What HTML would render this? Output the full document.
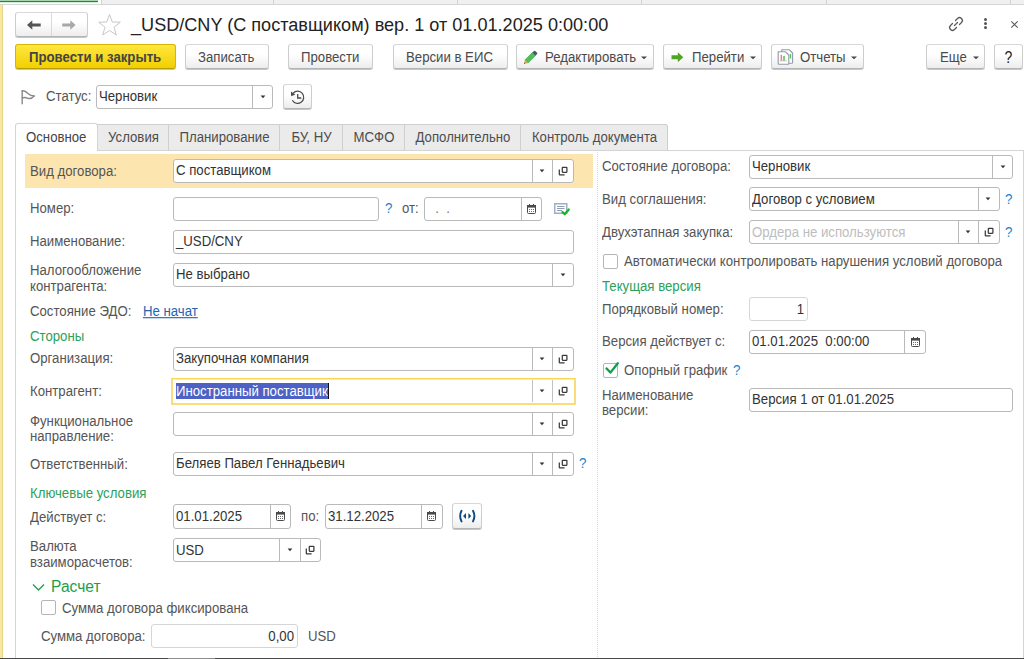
<!DOCTYPE html>
<html><head><meta charset="utf-8">
<style>
*{box-sizing:border-box}
html,body{margin:0;padding:0}
body{width:1024px;height:659px;overflow:hidden;position:relative;background:#fff;font-family:"Liberation Sans",sans-serif;font-size:13.2px;color:#4d4d4d}
.a{position:absolute}
.t{position:absolute;white-space:nowrap;line-height:16px;font-size:13.2px;color:#4d4d4d;transform:scaleY(1.12);transform-origin:0 12px}
.btn{position:absolute;border:1px solid #cdcdcd;border-top-color:#d8d8d8;border-bottom-color:#b4b4b4;border-radius:3px;background:linear-gradient(#fff 0%,#fff 40%,#ededed 100%);box-shadow:0 1px 0 #c6c6c6;color:#4a4a4a;font-size:13.2px;line-height:24px;white-space:nowrap}
.inp{position:absolute;border:1px solid #bababa;border-radius:3px;background:#fff}
.dv{position:absolute;top:0;bottom:0;width:1px;background:#bababa}
.tab{position:absolute;top:124px;height:26px;background:#ebebeb;border:1px solid #cfcfcf;border-right:none;border-bottom:none;color:#4d4d4d;line-height:25px;white-space:nowrap}
</style></head><body>

<div class="a" style="left:0;top:0;width:1024px;height:4px;background:#f0f0f0"></div>
<div class="a" style="left:0;top:0;width:101px;height:4px;background:#fff"></div>
<div class="a" style="left:0;top:0;width:98px;height:1px;background:#a6d6ae"></div>
<div class="a" style="left:0;top:1px;width:98px;height:1px;background:#0a9638"></div>
<div class="a" style="left:0;top:2px;width:98px;height:1px;background:#d5ecd9"></div>
<div class="a" style="left:101px;top:0;width:1px;height:4px;background:#d2d2d2"></div>
<div class="a" style="left:273px;top:0;width:1px;height:4px;background:#d2d2d2"></div>
<div class="a" style="left:457px;top:0;width:1px;height:4px;background:#d2d2d2"></div>
<div class="a" style="left:641px;top:0;width:1px;height:4px;background:#d2d2d2"></div>
<div class="a" style="left:826px;top:0;width:1px;height:4px;background:#d2d2d2"></div>
<div class="a" style="left:1010px;top:0;width:1px;height:4px;background:#d2d2d2"></div>
<div class="a" style="left:0;top:4px;width:1024px;height:1px;background:#d4d4d4"></div>
<div class="a" style="left:0;top:5px;width:2px;height:653px;background:#fbe99b"></div>
<div class="a" style="left:2px;top:5px;width:1px;height:653px;background:#e3d68f"></div>
<div class="a" style="left:0;top:658px;width:1024px;height:1px;background:#4a4a4a"></div>
<div class="a" style="left:168px;top:658px;width:47px;height:1px;background:#8c8c8c"></div>
<div class="btn" style="left:15px;top:12px;width:73px;height:25px;"></div>
<div class="a" style="left:51px;top:13px;width:1px;height:23px;background:#dadada"></div>
<svg class="a" style="left:26px;top:19px" width="16" height="12" viewBox="0 0 16 12"><path d="M1 6 L6.3 1.3 V4.5 H14.7 V7.5 H6.3 V10.7 Z" fill="#555"/></svg>
<svg class="a" style="left:62px;top:19px" width="16" height="12" viewBox="0 0 16 12"><path d="M13.6 6 L8.3 1.3 V4.5 H0.2 V7.5 H8.3 V10.7 Z" fill="#a8a8a8"/></svg>
<svg class="a" style="left:97px;top:13px" width="25" height="24" viewBox="0 0 25 24"><path d="M12.5 1.5 L15.3 9 L23.3 9.2 L17 14.2 L19.3 22 L12.5 17.5 L5.7 22 L8 14.2 L1.7 9.2 L9.7 9 Z" fill="none" stroke="#c4c8cc" stroke-width="1"/></svg>
<div class="t" style="left:131px;top:14px;color:#222;font-size:18.1px;line-height:22px;transform:scaleY(1.03);transform-origin:0 17px">_USD/CNY (С поставщиком) вер. 1 от 01.01.2025 0:00:00</div>
<svg class="a" style="left:947px;top:15px" width="18" height="18" viewBox="0 0 18 18"><g fill="none" stroke="#5c5c5c" stroke-width="1.3" stroke-linecap="round"><path d="M7.5 10.5 L10.5 7.5"/><path d="M8.5 5.5 L10.5 3.5 A2.8 2.8 0 0 1 14.5 7.5 L12.5 9.5"/><path d="M9.5 12.5 L7.5 14.5 A2.8 2.8 0 0 1 3.5 10.5 L5.5 8.5"/></g></svg>
<div class="a" style="left:984px;top:18px;width:3px;height:3px;border-radius:50%;background:#555"></div>
<div class="a" style="left:984px;top:22px;width:3px;height:3px;border-radius:50%;background:#555"></div>
<div class="a" style="left:984px;top:26px;width:3px;height:3px;border-radius:50%;background:#555"></div>
<svg class="a" style="left:1010px;top:20px" width="9" height="9" viewBox="0 0 9 9"><path d="M1.3 1.3 L7.7 7.7 M7.7 1.3 L1.3 7.7" stroke="#555" stroke-width="1.05"/></svg>
<div class="btn" style="left:15px;top:44px;width:161px;height:25px;background:linear-gradient(#ffe640,#f2d000);border-color:#d6b600;border-bottom-color:#b89c00"></div>
<div class="t" style="left:29px;top:50px;color:#4a4a4a;font-weight:bold;color:#444">Провести и закрыть</div>
<div class="btn" style="left:185px;top:44px;width:84px;height:25px;"></div>
<div class="t" style="left:198px;top:50px;color:#4a4a4a;">Записать</div>
<div class="btn" style="left:288px;top:44px;width:85px;height:25px;"></div>
<div class="t" style="left:301px;top:50px;color:#4a4a4a;">Провести</div>
<div class="btn" style="left:393px;top:44px;width:115px;height:25px;"></div>
<div class="t" style="left:406px;top:50px;color:#4a4a4a;">Версии в ЕИС</div>
<div class="btn" style="left:516px;top:44px;width:138px;height:25px;"></div>
<div class="t" style="left:545px;top:50px;color:#4a4a4a;">Редактировать</div>
<div class="btn" style="left:663px;top:44px;width:99px;height:25px;"></div>
<div class="t" style="left:692px;top:50px;color:#4a4a4a;">Перейти</div>
<div class="btn" style="left:771px;top:44px;width:93px;height:25px;"></div>
<div class="t" style="left:800px;top:50px;color:#4a4a4a;">Отчеты</div>
<div class="btn" style="left:926px;top:44px;width:59px;height:25px;"></div>
<div class="t" style="left:940px;top:50px;color:#4a4a4a;">Еще</div>
<div class="btn" style="left:994px;top:44px;width:29px;height:25px;"></div>
<div class="t" style="left:994px;top:50px;color:#4a4a4a;width:29px;text-align:center;color:#222;font-size:14px">?</div>
<svg class="a" style="left:641px;top:56px" width="6" height="4" viewBox="0 0 6 4"><path d="M0 0.5 H6 L3 3.3 Z" fill="#444"/></svg>
<svg class="a" style="left:750px;top:56px" width="6" height="4" viewBox="0 0 6 4"><path d="M0 0.5 H6 L3 3.3 Z" fill="#444"/></svg>
<svg class="a" style="left:851px;top:56px" width="6" height="4" viewBox="0 0 6 4"><path d="M0 0.5 H6 L3 3.3 Z" fill="#444"/></svg>
<svg class="a" style="left:973px;top:56px" width="6" height="4" viewBox="0 0 6 4"><path d="M0 0.5 H6 L3 3.3 Z" fill="#444"/></svg>
<svg class="a" style="left:523px;top:50px" width="15" height="15" viewBox="0 0 15 15"><path d="M9.3 2.6 L12.4 5.7 L5 13.1 L1.9 10 Z" fill="#4fbf5a" stroke="#3da548" stroke-width="0.6"/><path d="M9.3 2.6 L11 0.9 Q11.6 0.4 12.2 0.9 L14.1 2.8 Q14.6 3.4 14.1 4 L12.4 5.7 Z" fill="#4a5566"/><path d="M1.9 10 L5 13.1 L1 14 Z" fill="#d8a850"/><path d="M1.3 12.6 L2.4 13.7 L1 14 Z" fill="#555"/></svg>
<svg class="a" style="left:671px;top:52px" width="13" height="11" viewBox="0 0 13 11"><path d="M0.5 3.2 H6.8 V0.3 L12.3 5.3 L6.8 10.3 V7.3 H0.5 Z" fill="#4ea720"/></svg>
<svg class="a" style="left:777px;top:49px" width="17" height="17" viewBox="0 0 17 17"><path d="M4.8 0.8 H12.3 L15.6 4.1 V13.6 Q15.6 14.3 14.9 14.3 H5.5 Q4.8 14.3 4.8 13.6 Z" fill="#fff" stroke="#8e9caa" stroke-width="1.1"/><path d="M1.2 2.8 H8.6 L11.8 6 V14.6 Q11.8 15.3 11.1 15.3 H1.9 Q1.2 15.3 1.2 14.6 Z" fill="#fff" stroke="#8e9caa" stroke-width="1.1"/><rect x="3.6" y="5.8" width="1.5" height="6" fill="#ff7a6a"/><rect x="6.2" y="7" width="1.6" height="4.8" fill="#5cc35c"/><rect x="12.8" y="5" width="1.3" height="4.5" fill="#5cc35c"/><path d="M2.6 11.9 H10" stroke="#aaa" stroke-width="0.6"/></svg>
<svg class="a" style="left:16px;top:86px" width="24" height="22" viewBox="0 0 24 22"><g fill="none" stroke="#8a8a8a" stroke-width="1.4" stroke-linecap="round"><path d="M6.2 4.7 V17.7"/><path d="M6.2 4.9 C8.5 4.3 10 5.5 12 7.5 C14 9.5 15.5 10 18.2 10"/><path d="M6.2 12 C8 11.3 10 11.5 12 12.3 C14 13 16 12.5 18.2 10"/></g></svg>
<div class="t" style="left:46px;top:89px;color:#555;font-size:13.2px;line-height:16px;">Статус:</div>
<div class="inp" style="left:96px;top:85px;width:177px;height:24px;border-color:#bababa">
<div class="dv" style="left:155px"></div>
</div>
<svg class="a" style="left:260px;top:95px" width="6" height="4" viewBox="0 0 6 4"><path d="M0.6 0.6 H5.4 L3 3.3 Z" fill="#333"/></svg>
<div class="t" style="left:99px;top:89px;color:#333">Черновик</div>
<div class="btn" style="left:283px;top:84px;width:29px;height:25px;"></div>
<svg class="a" style="left:289px;top:89px" width="17" height="17" viewBox="0 0 17 17"><path d="M3.3 11.3 A6.1 6.1 0 1 0 4.3 4" fill="none" stroke="#4a4a4a" stroke-width="1.25"/><path d="M1.9 2.4 L2.2 7.2 L6.4 5.5 Z" fill="#4a4a4a"/><path d="M8.7 4.9 V9 H12.3" fill="none" stroke="#4a4a4a" stroke-width="1.3"/></svg>
<div class="a" style="left:15px;top:150px;width:1009px;height:508px;border-left:1px solid #d4d4d4;border-top:1px solid #d4d4d4;border-right:1px solid #d4d4d4"></div>
<div class="tab" style="left:97px;width:72px"></div>
<div class="t" style="left:98px;width:71px;text-align:center;top:130px">Условия</div>
<div class="tab" style="left:168px;width:112px"></div>
<div class="t" style="left:169px;width:111px;text-align:center;top:130px">Планирование</div>
<div class="tab" style="left:279px;width:64px"></div>
<div class="t" style="left:280px;width:63px;text-align:center;top:130px">БУ, НУ</div>
<div class="tab" style="left:342px;width:63px"></div>
<div class="t" style="left:343px;width:62px;text-align:center;top:130px">МСФО</div>
<div class="tab" style="left:404px;width:117px"></div>
<div class="t" style="left:405px;width:116px;text-align:center;top:130px">Дополнительно</div>
<div class="tab" style="left:520px;width:148px;border-right:1px solid #cfcfcf;border-top-right-radius:3px"></div>
<div class="t" style="left:521px;width:147px;text-align:center;top:130px">Контроль документа</div>
<div class="a" style="left:15px;top:123px;width:83px;height:28px;background:#fff;border:1px solid #d4d4d4;border-bottom:none;border-top-left-radius:3px;border-top-right-radius:3px"></div>
<div class="t" style="left:26px;top:130px;color:#444;font-size:13.2px;line-height:16px;">Основное</div>
<div class="a" style="left:25px;top:154px;width:568px;height:34px;background:#fde5b0"></div>
<div class="a" style="left:597px;top:152px;width:1px;height:505px;border-left:1px dotted #d8d8d8"></div>
<div class="t" style="left:30px;top:164px;color:#555;font-size:13.2px;line-height:16px;">Вид договора:</div>
<div class="inp" style="left:173px;top:159px;width:401px;height:24px;border-color:#bababa">
<div class="dv" style="left:358px"></div>
<div class="dv" style="left:378px"></div>
</div>
<svg class="a" style="left:539px;top:169px" width="6" height="4" viewBox="0 0 6 4"><path d="M0.6 0.6 H5.4 L3 3.3 Z" fill="#333"/></svg>
<svg class="a" style="left:558px;top:166px" width="11" height="11" viewBox="0 0 11 11"><rect x="4.3" y="1.3" width="4.6" height="5" rx="0.5" fill="none" stroke="#3a3a3a" stroke-width="1.25"/><path d="M1.3 3.6 V8.2 Q1.3 8.8 1.9 8.8 H6.6" fill="none" stroke="#3a3a3a" stroke-width="1.25"/></svg>
<div class="t" style="left:176px;top:163px;color:#333">С поставщиком</div>
<div class="t" style="left:30px;top:201px;color:#555;font-size:13.2px;line-height:16px;">Номер:</div>
<div class="inp" style="left:173px;top:197px;width:206px;height:24px;border-color:#bababa">
</div>
<div class="t" style="left:385px;top:201px;color:#2384d2;font-size:13.4px">?</div>
<div class="t" style="left:402px;top:201px;color:#555;font-size:13.2px;line-height:16px;">от:</div>
<div class="inp" style="left:424px;top:197px;width:118px;height:24px;border-color:#bababa">
<div class="dv" style="left:96px"></div>
</div>
<svg class="a" style="left:526px;top:203px" width="11" height="12" viewBox="0 0 11 12"><rect x="1.5" y="2.5" width="8" height="8" rx="1" fill="#fff" stroke="#4a4a4a" stroke-width="1"/><rect x="1" y="2" width="9" height="2.6" fill="#4a4a4a"/><rect x="3" y="1" width="1" height="2" fill="#4a4a4a"/><rect x="7" y="1" width="1" height="2" fill="#4a4a4a"/><g fill="#6a6a6a"><rect x="3" y="6" width="1" height="1"/><rect x="5" y="6" width="1" height="1"/><rect x="7" y="6" width="1" height="1"/><rect x="3" y="8" width="1" height="1"/><rect x="5" y="8" width="1" height="1"/><rect x="7" y="8" width="1" height="1"/></g></svg>
<div class="t" style="left:428px;top:201px;color:#777">&nbsp; .&nbsp; .</div>
<svg class="a" style="left:554px;top:203px" width="16" height="13" viewBox="0 0 16 13"><rect x="0.75" y="0.75" width="12" height="9.5" fill="#fff" stroke="#9fb0c4" stroke-width="1.5"/><path d="M3 3.5 H10.5 M3 5.5 H10.5 M3 7.5 H8" stroke="#8fa0b4" stroke-width="1"/><path d="M8.5 9 L10.7 11.3 L14.8 6.5" fill="none" stroke="#18b52b" stroke-width="2.2" stroke-linecap="round" stroke-linejoin="round"/></svg>
<div class="t" style="left:30px;top:234px;color:#555;font-size:13.2px;line-height:16px;">Наименование:</div>
<div class="inp" style="left:173px;top:230px;width:401px;height:24px;border-color:#bababa">
</div>
<div class="t" style="left:176px;top:234px;color:#333">_USD/CNY</div>
<div class="t" style="left:30px;top:263px;color:#555;font-size:13.2px;line-height:16px;">Налогообложение</div>
<div class="t" style="left:30px;top:279px;color:#555;font-size:13.2px;line-height:16px;">контрагента:</div>
<div class="inp" style="left:173px;top:263px;width:401px;height:24px;border-color:#bababa">
<div class="dv" style="left:378px"></div>
</div>
<svg class="a" style="left:560px;top:273px" width="6" height="4" viewBox="0 0 6 4"><path d="M0.6 0.6 H5.4 L3 3.3 Z" fill="#333"/></svg>
<div class="t" style="left:176px;top:267px;color:#333">Не выбрано</div>
<div class="t" style="left:30px;top:304px;color:#555;font-size:13.2px;line-height:16px;">Состояние ЭДО:</div>
<div class="t" style="left:143px;top:304px;color:#2166b5;font-size:13.2px;line-height:16px;text-decoration:underline">Не начат</div>
<div class="t" style="left:30px;top:329px;color:#2ba15a;font-size:13.2px;line-height:16px;">Стороны</div>
<div class="t" style="left:30px;top:351px;color:#555;font-size:13.2px;line-height:16px;">Организация:</div>
<div class="inp" style="left:173px;top:347px;width:401px;height:24px;border-color:#bababa">
<div class="dv" style="left:358px"></div>
<div class="dv" style="left:378px"></div>
</div>
<svg class="a" style="left:539px;top:357px" width="6" height="4" viewBox="0 0 6 4"><path d="M0.6 0.6 H5.4 L3 3.3 Z" fill="#333"/></svg>
<svg class="a" style="left:558px;top:354px" width="11" height="11" viewBox="0 0 11 11"><rect x="4.3" y="1.3" width="4.6" height="5" rx="0.5" fill="none" stroke="#3a3a3a" stroke-width="1.25"/><path d="M1.3 3.6 V8.2 Q1.3 8.8 1.9 8.8 H6.6" fill="none" stroke="#3a3a3a" stroke-width="1.25"/></svg>
<div class="t" style="left:176px;top:351px;color:#333">Закупочная компания</div>
<div class="t" style="left:30px;top:384px;color:#555;font-size:13.2px;line-height:16px;">Контрагент:</div>
<div class="a" style="left:171px;top:378px;width:405px;height:27px;border:2px solid #fbdc7c;border-top:1px solid #fbd657;box-shadow:inset 0 1px 0 #fdebb0;border-radius:1px;background:#fff"></div>
<div class="a" style="left:532px;top:380px;width:1px;height:22px;background:#c2c2c2"></div>
<div class="a" style="left:552px;top:380px;width:1px;height:22px;background:#c2c2c2"></div>
<svg class="a" style="left:539px;top:389px" width="6" height="4" viewBox="0 0 6 4"><path d="M0.6 0.6 H5.4 L3 3.3 Z" fill="#333"/></svg>
<svg class="a" style="left:558px;top:386px" width="11" height="11" viewBox="0 0 11 11"><rect x="4.3" y="1.3" width="4.6" height="5" rx="0.5" fill="none" stroke="#3a3a3a" stroke-width="1.25"/><path d="M1.3 3.6 V8.2 Q1.3 8.8 1.9 8.8 H6.6" fill="none" stroke="#3a3a3a" stroke-width="1.25"/></svg>
<div class="a" style="left:176px;top:383px;width:153px;height:16px;background:#4d62c4"></div>
<div class="t" style="left:176px;top:384px;color:#fff;font-size:13.2px;line-height:16px;">Иностранный поставщик</div>
<div class="a" style="left:328px;top:383px;width:1px;height:16px;background:#111"></div>
<div class="t" style="left:30px;top:414px;color:#555;font-size:13.2px;line-height:16px;">Функциональное</div>
<div class="t" style="left:30px;top:429px;color:#555;font-size:13.2px;line-height:16px;">направление:</div>
<div class="inp" style="left:173px;top:412px;width:401px;height:24px;border-color:#bababa">
<div class="dv" style="left:358px"></div>
<div class="dv" style="left:378px"></div>
</div>
<svg class="a" style="left:539px;top:422px" width="6" height="4" viewBox="0 0 6 4"><path d="M0.6 0.6 H5.4 L3 3.3 Z" fill="#333"/></svg>
<svg class="a" style="left:558px;top:419px" width="11" height="11" viewBox="0 0 11 11"><rect x="4.3" y="1.3" width="4.6" height="5" rx="0.5" fill="none" stroke="#3a3a3a" stroke-width="1.25"/><path d="M1.3 3.6 V8.2 Q1.3 8.8 1.9 8.8 H6.6" fill="none" stroke="#3a3a3a" stroke-width="1.25"/></svg>
<div class="t" style="left:30px;top:457px;color:#555;font-size:13.2px;line-height:16px;">Ответственный:</div>
<div class="inp" style="left:173px;top:452px;width:401px;height:24px;border-color:#bababa">
<div class="dv" style="left:358px"></div>
<div class="dv" style="left:378px"></div>
</div>
<svg class="a" style="left:539px;top:462px" width="6" height="4" viewBox="0 0 6 4"><path d="M0.6 0.6 H5.4 L3 3.3 Z" fill="#333"/></svg>
<svg class="a" style="left:558px;top:459px" width="11" height="11" viewBox="0 0 11 11"><rect x="4.3" y="1.3" width="4.6" height="5" rx="0.5" fill="none" stroke="#3a3a3a" stroke-width="1.25"/><path d="M1.3 3.6 V8.2 Q1.3 8.8 1.9 8.8 H6.6" fill="none" stroke="#3a3a3a" stroke-width="1.25"/></svg>
<div class="t" style="left:176px;top:456px;color:#333">Беляев Павел Геннадьевич</div>
<div class="t" style="left:579px;top:456px;color:#2384d2;font-size:13.4px">?</div>
<div class="t" style="left:30px;top:486px;color:#2ba15a;font-size:13.2px;line-height:16px;">Ключевые условия</div>
<div class="t" style="left:30px;top:510px;color:#555;font-size:13.2px;line-height:16px;">Действует с:</div>
<div class="inp" style="left:173px;top:504px;width:118px;height:25px;border-color:#bababa">
<div class="dv" style="left:96px"></div>
</div>
<svg class="a" style="left:275px;top:510px" width="11" height="12" viewBox="0 0 11 12"><rect x="1.5" y="2.5" width="8" height="8" rx="1" fill="#fff" stroke="#4a4a4a" stroke-width="1"/><rect x="1" y="2" width="9" height="2.6" fill="#4a4a4a"/><rect x="3" y="1" width="1" height="2" fill="#4a4a4a"/><rect x="7" y="1" width="1" height="2" fill="#4a4a4a"/><g fill="#6a6a6a"><rect x="3" y="6" width="1" height="1"/><rect x="5" y="6" width="1" height="1"/><rect x="7" y="6" width="1" height="1"/><rect x="3" y="8" width="1" height="1"/><rect x="5" y="8" width="1" height="1"/><rect x="7" y="8" width="1" height="1"/></g></svg>
<div class="t" style="left:176px;top:509px;color:#333">01.01.2025</div>
<div class="t" style="left:301px;top:509px;color:#555;font-size:13.2px;line-height:16px;">по:</div>
<div class="inp" style="left:325px;top:504px;width:118px;height:25px;border-color:#bababa">
<div class="dv" style="left:95px"></div>
</div>
<svg class="a" style="left:426px;top:510px" width="11" height="12" viewBox="0 0 11 12"><rect x="1.5" y="2.5" width="8" height="8" rx="1" fill="#fff" stroke="#4a4a4a" stroke-width="1"/><rect x="1" y="2" width="9" height="2.6" fill="#4a4a4a"/><rect x="3" y="1" width="1" height="2" fill="#4a4a4a"/><rect x="7" y="1" width="1" height="2" fill="#4a4a4a"/><g fill="#6a6a6a"><rect x="3" y="6" width="1" height="1"/><rect x="5" y="6" width="1" height="1"/><rect x="7" y="6" width="1" height="1"/><rect x="3" y="8" width="1" height="1"/><rect x="5" y="8" width="1" height="1"/><rect x="7" y="8" width="1" height="1"/></g></svg>
<div class="t" style="left:328px;top:509px;color:#333">31.12.2025</div>
<div class="btn" style="left:452px;top:503px;width:30px;height:26px;"></div>
<svg class="a" style="left:458px;top:509px" width="19" height="14" viewBox="0 0 19 14"><g fill="none" stroke="#0e4a80" stroke-width="1.9" stroke-linecap="round"><path d="M3.5 1.8 Q0.8 7 3.5 12.4"/><path d="M15 1.8 Q17.8 7 15 12.4"/></g><path d="M5 7 L8 4 V10 Z M13.2 7 L10.4 4 V10 Z" fill="#0e4a80"/></svg>
<div class="t" style="left:30px;top:539px;color:#555;font-size:13.2px;line-height:16px;">Валюта</div>
<div class="t" style="left:30px;top:555px;color:#555;font-size:13.2px;line-height:16px;">взаиморасчетов:</div>
<div class="inp" style="left:173px;top:538px;width:148px;height:24px;border-color:#bababa">
<div class="dv" style="left:105px"></div>
<div class="dv" style="left:126px"></div>
</div>
<svg class="a" style="left:287px;top:548px" width="6" height="4" viewBox="0 0 6 4"><path d="M0.6 0.6 H5.4 L3 3.3 Z" fill="#333"/></svg>
<svg class="a" style="left:305px;top:545px" width="11" height="11" viewBox="0 0 11 11"><rect x="4.3" y="1.3" width="4.6" height="5" rx="0.5" fill="none" stroke="#3a3a3a" stroke-width="1.25"/><path d="M1.3 3.6 V8.2 Q1.3 8.8 1.9 8.8 H6.6" fill="none" stroke="#3a3a3a" stroke-width="1.25"/></svg>
<div class="t" style="left:176px;top:543px;color:#333">USD</div>
<svg class="a" style="left:32px;top:583px" width="13" height="9" viewBox="0 0 13 9"><path d="M1 1.5 L6.5 7 L12 1.5" fill="none" stroke="#2ba15a" stroke-width="1.5"/></svg>
<div class="t" style="left:51px;top:578px;color:#1e9e4a;font-size:15px;line-height:18px;font-size:15.6px;transform:scaleY(1.0);transform-origin:0 14px">Расчет</div>
<div class="a" style="left:41px;top:600px;width:15px;height:15px;border:1px solid #b5b5b5;border-radius:2px;background:#fff"></div>
<div class="t" style="left:62px;top:601px;color:#555;font-size:13.2px;line-height:16px;">Сумма договора фиксирована</div>
<div class="t" style="left:41px;top:629px;color:#555;font-size:13.2px;line-height:16px;">Сумма договора:</div>
<div class="inp" style="left:151px;top:624px;width:147px;height:24px;border-color:#d6d6d6">
</div>
<div class="t" style="left:151px;width:143px;text-align:right;top:629px;color:#333">0,00</div>
<div class="t" style="left:308px;top:629px;color:#555;font-size:13.2px;line-height:16px;">USD</div>
<div class="t" style="left:602px;top:159px;color:#555;font-size:13.2px;line-height:16px;">Состояние договора:</div>
<div class="inp" style="left:749px;top:155px;width:264px;height:24px;border-color:#bababa">
<div class="dv" style="left:242px"></div>
</div>
<svg class="a" style="left:1000px;top:165px" width="6" height="4" viewBox="0 0 6 4"><path d="M0.6 0.6 H5.4 L3 3.3 Z" fill="#333"/></svg>
<div class="t" style="left:752px;top:159px;color:#333">Черновик</div>
<div class="t" style="left:602px;top:192px;color:#555;font-size:13.2px;line-height:16px;">Вид соглашения:</div>
<div class="inp" style="left:749px;top:187px;width:251px;height:24px;border-color:#bababa">
<div class="dv" style="left:228px"></div>
</div>
<svg class="a" style="left:985px;top:197px" width="6" height="4" viewBox="0 0 6 4"><path d="M0.6 0.6 H5.4 L3 3.3 Z" fill="#333"/></svg>
<div class="t" style="left:752px;top:192px;color:#333">Договор с условием</div>
<div class="t" style="left:1005px;top:192px;color:#2384d2;font-size:13.4px">?</div>
<div class="t" style="left:602px;top:225px;color:#555;font-size:13.2px;line-height:16px;">Двухэтапная закупка:</div>
<div class="inp" style="left:749px;top:220px;width:251px;height:24px;border-color:#bababa">
<div class="dv" style="left:208px"></div>
<div class="dv" style="left:228px"></div>
</div>
<svg class="a" style="left:965px;top:230px" width="6" height="4" viewBox="0 0 6 4"><path d="M0.6 0.6 H5.4 L3 3.3 Z" fill="#333"/></svg>
<svg class="a" style="left:984px;top:227px" width="11" height="11" viewBox="0 0 11 11"><rect x="4.3" y="1.3" width="4.6" height="5" rx="0.5" fill="none" stroke="#3a3a3a" stroke-width="1.25"/><path d="M1.3 3.6 V8.2 Q1.3 8.8 1.9 8.8 H6.6" fill="none" stroke="#3a3a3a" stroke-width="1.25"/></svg>
<div class="t" style="left:752px;top:225px;color:#bdbdbd">Ордера не используются</div>
<div class="t" style="left:1005px;top:225px;color:#2384d2;font-size:13.4px">?</div>
<div class="a" style="left:603px;top:254px;width:15px;height:15px;border:1px solid #b5b5b5;border-radius:2px;background:#fff"></div>
<div class="t" style="left:624px;top:254px;color:#555;font-size:13.2px;line-height:16px;">Автоматически контролировать нарушения условий договора</div>
<div class="t" style="left:602px;top:279px;color:#2ba15a;font-size:13.2px;line-height:16px;">Текущая версия</div>
<div class="t" style="left:602px;top:302px;color:#555;font-size:13.2px;line-height:16px;">Порядковый номер:</div>
<div class="inp" style="left:749px;top:297px;width:59px;height:24px;border-color:#d6d6d6">
</div>
<div class="t" style="left:749px;width:55px;text-align:right;top:302px;color:#333">1</div>
<div class="t" style="left:602px;top:334px;color:#555;font-size:13.2px;line-height:16px;">Версия действует с:</div>
<div class="inp" style="left:749px;top:330px;width:177px;height:24px;border-color:#bababa">
<div class="dv" style="left:154px"></div>
</div>
<svg class="a" style="left:910px;top:336px" width="11" height="12" viewBox="0 0 11 12"><rect x="1.5" y="2.5" width="8" height="8" rx="1" fill="#fff" stroke="#4a4a4a" stroke-width="1"/><rect x="1" y="2" width="9" height="2.6" fill="#4a4a4a"/><rect x="3" y="1" width="1" height="2" fill="#4a4a4a"/><rect x="7" y="1" width="1" height="2" fill="#4a4a4a"/><g fill="#6a6a6a"><rect x="3" y="6" width="1" height="1"/><rect x="5" y="6" width="1" height="1"/><rect x="7" y="6" width="1" height="1"/><rect x="3" y="8" width="1" height="1"/><rect x="5" y="8" width="1" height="1"/><rect x="7" y="8" width="1" height="1"/></g></svg>
<div class="t" style="left:752px;top:334px;color:#333">01.01.2025&nbsp; 0:00:00</div>
<div class="a" style="left:603px;top:363px;width:15px;height:15px;border:1px solid #b5b5b5;border-radius:2px;background:#fff"></div>
<svg class="a" style="left:605px;top:360px" width="14" height="15" viewBox="0 0 14 15"><path d="M1.6 8.4 L5.4 12.6 L12.8 3.3" fill="none" stroke="#109e48" stroke-width="2.3" stroke-linecap="round" stroke-linejoin="round"/></svg>
<div class="t" style="left:624px;top:363px;color:#555;font-size:13.2px;line-height:16px;">Опорный график</div>
<div class="t" style="left:733px;top:363px;color:#2384d2;font-size:13.4px">?</div>
<div class="t" style="left:602px;top:388px;color:#555;font-size:13.2px;line-height:16px;">Наименование</div>
<div class="t" style="left:602px;top:403px;color:#555;font-size:13.2px;line-height:16px;">версии:</div>
<div class="inp" style="left:749px;top:388px;width:264px;height:24px;border-color:#bababa">
</div>
<div class="t" style="left:752px;top:392px;color:#333">Версия 1 от 01.01.2025</div>
</body></html>
